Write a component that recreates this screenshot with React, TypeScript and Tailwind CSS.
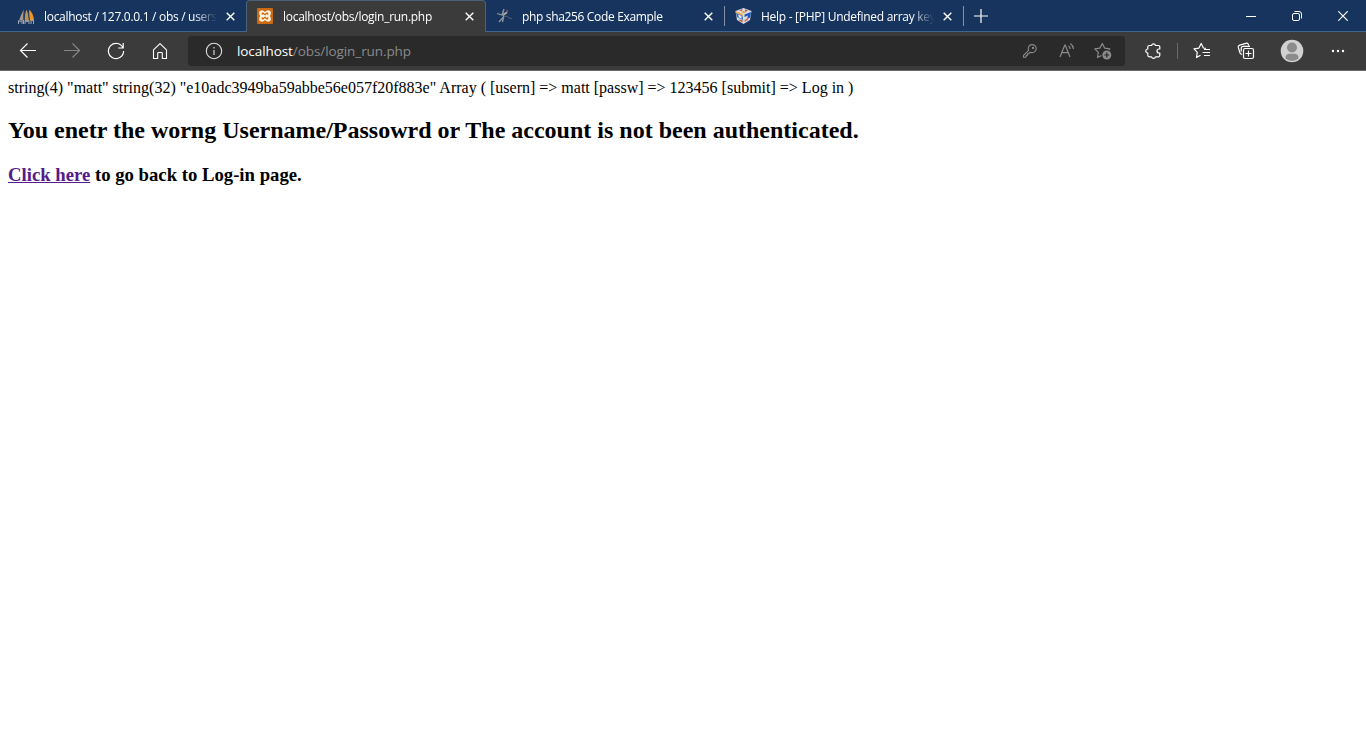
import type { ReactNode } from "react";

interface TabData {
  title: string;
  icon: ReactNode;
  boxClass: string;
  textClass: string;
  divider?: boolean;
}

function PhpMyAdminIcon() {
  return (
    <svg width="17" height="17" viewBox="0 0 17 17">
      <path d="M6 1.500C4 4.500 2.200 8.500 1.200 12.500h4.600C5.200 8 5.300 5 6 1.500Z" fill="#a39a8c" />
      <path d="M8.500 1.500C7 5 6.500 9 7 13h4.500C10.800 8.500 9.800 4.500 8.500 1.500Z" fill="#b9935d" />
      <path d="M11.300 1.500C11 5 11.300 9 12 12.500h4C15.800 8 14 4 11.300 1.500Z" fill="#e8962e" />
      <path d="M7 3.500C6 7 5.600 9.500 5.500 13M10.500 4c-.2 3 .3 6.500 1 9" stroke="#3a3d4c" strokeWidth=".8" fill="none" />
      <path d="M.5 16v-3.500l2 1.500 1.500-1.500V16M5.500 12v4M7 16v-3.500l2 1.500 2-1.500V16M13 16v-3.500h2.500V16" stroke="#a2a7b3" strokeWidth="1" fill="none" />
    </svg>
  );
}

function XamppIcon() {
  return (
    <svg width="16" height="16" viewBox="0 0 16 16">
      <rect width="16" height="16" rx="1" fill="#cb6a12" />
      <path
        d="M4 2.500h2.200L8 4l1.800-1.500H12A1.800 1.800 0 0 1 13.800 4.300v2L12.800 8l1 1.700v2a1.800 1.800 0 0 1-1.800 1.800H9.800L8 12l-1.800 1.500H4a1.800 1.800 0 0 1-1.800-1.800v-2L3.200 8l-1-1.700v-2A1.800 1.800 0 0 1 4 2.500Z"
        fill="#fff3df"
      />
      <path d="M4.800 5.200h1.400L8 6.700l1.800-1.500h1.400M4.800 10.800h1.400L8 9.300l1.800 1.500h1.400M5.300 5.500v1.300M10.700 5.500v1.300M5.300 9.200v1.300M10.700 9.200v1.300" stroke="#cb6a12" strokeWidth="1.200" fill="none" />
    </svg>
  );
}

function GrepperIcon() {
  return (
    <svg width="16" height="16" viewBox="0 0 16 16" fill="none">
      <path d="M1 5.500 6 7l2-6M7 3l.5 6L3 14M7 8l4-4M7.500 9.500 6.500 14" stroke="#8d979c" strokeWidth="1.300" />
      <path d="m8 6 3-1.500" stroke="#a7aaa6" strokeWidth="1.500" />
      <path d="m10.500 3.700 1.200-1.500" stroke="#a64b52" strokeWidth="1.500" />
      <path d="M8 8.700 11 8l2 2 3 .5" stroke="#536078" strokeWidth="1" />
    </svg>
  );
}

function ForumIcon() {
  return (
    <svg width="17" height="16" viewBox="0 0 17 16">
      <path d="M.5 3 8.500 0l8 3L15 12l-6.500 4L2 12Z" fill="#d9dce3" />
      <path d="M1 4.500 7.500 7.500 8 12 2 9Z" fill="#2968c4" />
      <path d="M.5 3 8 6v2L1 5Z" fill="#f0ad4f" />
      <path d="M3 6.500 6.500 8v2.500L4 9.500Z" fill="#edf0f3" />
      <path d="M9.500 6.500 16 4l-.8 5.500L12 11l1-3.500-3.500 1.500Z" fill="#2059b9" />
      <path d="M4 2.500 7.500 1 7 3ZM10 1.200l3 1.300-3 1.500ZM3 11.500l4.500 3V12Z" fill="#bf5639" />
      <path d="m9.500 12 4-2.500-.5 2.500-3.500 2Z" fill="#d9724f" />
      <path d="M6 3.800 8.500 3l3 1-3 1.200Z" fill="#e6a14f" />
    </svg>
  );
}

function CloseIcon() {
  return (
    <svg width="9" height="9" viewBox="0 0 9 9" fill="none" stroke="#fff" strokeWidth="1.400">
      <path d="m.7.7 7.600 7.600M8.300.7.7 8.300" />
    </svg>
  );
}

const tabs: TabData[] = [
  {
    title: "localhost / 127.0.0.1 / obs / users",
    icon: <PhpMyAdminIcon />,
    boxClass: "h-[31px] w-[239px] pl-[11px] pt-px",
    textClass: "tracking-[-0.3px]",
  },
  {
    title: "localhost/obs/login_run.php",
    icon: <XamppIcon />,
    boxClass: "relative z-10 h-8 w-60 rounded-t-[4px] border-x border-t border-[#49627a] bg-[#3b3b3b] pb-px pl-[10px]",
    textClass: "tracking-[-0.28px]",
  },
  {
    title: "php sha256 Code Example",
    icon: <GrepperIcon />,
    boxClass: "h-[31px] w-[239px] pl-[10px] pt-px",
    textClass: "tracking-[-0.34px]",
    divider: true,
  },
  {
    title: "Help - [PHP] Undefined array key",
    icon: <ForumIcon />,
    boxClass: "h-[31px] w-[239px] pl-[10px] pt-px",
    textClass: "tracking-[-0.28px]",
    divider: true,
  },
];

function Tab({ tab }: { tab: TabData }) {
  return (
    <div className={`flex items-center ${tab.boxClass}`}>
      <span className="flex w-[26px] shrink-0">{tab.icon}</span>
      <span
        className={`w-[173px] shrink-0 overflow-hidden whitespace-nowrap pt-px text-[12px] leading-4 text-white [mask-image:linear-gradient(to_right,black_150px,transparent_173px)] ${tab.textClass}`}
      >
        {tab.title}
      </span>
      <span className="ml-[9px] flex shrink-0">
        <CloseIcon />
      </span>
      {tab.divider && <span className="ml-auto h-5 w-px bg-[#8290a6]" />}
    </div>
  );
}

function TitleBar() {
  return (
    <div className="flex h-8 border-b border-[#3e668e] bg-[#17345f] pl-[7px]">
      <div className="flex h-[31px]">
        {tabs.map((tab) => (
          <Tab key={tab.title} tab={tab} />
        ))}
      </div>
      <div className="flex h-[31px] w-[34px] items-center justify-center">
        <svg width="14" height="14" viewBox="0 0 14 14" fill="none" stroke="#fff" strokeWidth="1.200">
          <path d="M0 7h14M7 0v14" />
        </svg>
      </div>
      {/* Window controls */}
      <div className="ml-auto flex h-[31px]">
        <div className="flex w-[46px] items-center justify-center">
          <svg width="10" height="10" viewBox="0 0 10 10" stroke="#fff">
            <path d="M0 5.500h10" />
          </svg>
        </div>
        <div className="flex w-[46px] items-center justify-center">
          <svg width="10" height="10" viewBox="0 0 10 10" fill="none" stroke="#fff">
            <rect x=".5" y="2.500" width="7" height="7" rx="1.500" />
            <path d="M2.500.5H7A2.500 2.500 0 0 1 9.500 3v4.500" />
          </svg>
        </div>
        <div className="flex w-[46px] items-center justify-center pt-px">
          <svg width="10" height="10" viewBox="0 0 10 10" fill="none" stroke="#fff" strokeWidth="1.200">
            <path d="m.3.3 9.400 9.400M9.700.3.3 9.700" />
          </svg>
        </div>
      </div>
    </div>
  );
}

function ToolButton({ width = "w-11", children }: { width?: string; children: ReactNode }) {
  return <div className={`flex h-[30px] shrink-0 items-center justify-center ${width}`}>{children}</div>;
}

function Toolbar() {
  return (
    <div className="flex h-[39px] items-center border-b border-[#69696b] bg-[#3b3b3b] pl-[6px]">
      <ToolButton>
        <svg width="18" height="18" viewBox="0 0 18 18" fill="none" stroke="#fff" strokeWidth="1.200">
          <path d="M17 8.500H1.500M8.500 1.500l-7 7 7 7" />
        </svg>
      </ToolButton>
      <ToolButton>
        <svg width="18" height="18" viewBox="0 0 18 18" fill="none" stroke="#858585" strokeWidth="1.200">
          <path d="M1 8.500h15.500M9.500 1.500l7 7-7 7" />
        </svg>
      </ToolButton>
      <ToolButton>
        <svg width="18" height="18" viewBox="0 0 18 18" fill="none" stroke="#fff" strokeWidth="1.200">
          <path d="M16 6A7.600 7.600 0 1 0 16.600 9M16.200 1v5h-5" />
        </svg>
      </ToolButton>
      <ToolButton>
        <svg width="18" height="18" viewBox="0 0 18 18" fill="none" stroke="#fff" strokeWidth="1.100" strokeLinejoin="round">
          <path d="M2.500 7.800 9 1.700l6.500 6.100v8.700h-4.200v-5.200a.8.800 0 0 0-.8-.8h-3a.8.800 0 0 0-.8.800v5.200H2.500Z" />
        </svg>
      </ToolButton>

      {/* Address bar */}
      <div className="ml-[6px] flex h-[30px] w-[937px] items-center rounded-[3px] bg-[#2a2a2a] pl-[17px]">
        <svg width="18" height="18" viewBox="0 0 18 18" fill="none" stroke="#e0e0e0" strokeWidth="1.100">
          <circle cx="9" cy="9" r="7.700" />
          <path d="M9 8v5M9 5v1.400" />
        </svg>
        <span className="ml-[14px] whitespace-nowrap text-[13.5px] leading-5 tracking-[-0.08px] text-[#8b8b8b]">
          <span className="text-white">localhost</span>/obs/login_run.php
        </span>
        <div className="ml-auto flex pr-1">
          <ToolButton width="w-9">
            <svg width="16" height="16" viewBox="0 0 16 16" fill="none" stroke="#8b8b8b" strokeWidth="1.100" strokeLinejoin="round">
              <path d="M6.600 7.300A4 4 0 1 1 9 9.400L8 9.300 6.800 10.800H5.500v1.500H4.200v1.500L3.500 14.300H1.500v-2Z" />
              <circle cx="11" cy="5" r=".6" />
            </svg>
          </ToolButton>
          <ToolButton width="w-[37px]">
            <svg width="18" height="18" viewBox="0 0 18 18" fill="none" stroke="#8b8b8b" strokeWidth="1.200">
              <path d="M2 15 6.800 3h.4L12 15M3.700 10.700h6.600M10.500 4c1 .7 1.600 1.700 1.700 3M12.300 1.500c1.800 1.300 2.900 3.100 3.200 5.500" />
            </svg>
          </ToolButton>
          <ToolButton width="w-9">
            <svg width="18" height="18" viewBox="0 0 18 18" fill="none" stroke="#8b8b8b" strokeWidth="1.200" strokeLinejoin="round">
              <path d="m7.500 13.500-4 2 .8-5.200L.8 6.800l5-.7L8.300 1.500l2.300 4.600 5.200.7-1 1" />
              <circle cx="12.800" cy="13" r="4.500" fill="#8b8b8b" stroke="none" />
              <path d="M12.800 10.500v5M10.300 13h5" stroke="#2a2a2a" />
            </svg>
          </ToolButton>
        </div>
      </div>

      <ToolButton width="w-14">
        <svg width="18" height="18" viewBox="0 0 18 18" fill="none" stroke="#fff" strokeWidth="1.200" strokeLinejoin="round">
          <path d="M5.300 3.500h2.300a2 2 0 0 1 3.900 0h2.800a1.500 1.500 0 0 1 1.500 1.500v2H15a2 2 0 0 0 0 4h.8v2.300a1.500 1.500 0 0 1-1.500 1.500h-2.800a2 2 0 0 1-3.900 0H5.300a1.500 1.500 0 0 1-1.500-1.500V11a2 2 0 0 1 0-4V5a1.500 1.500 0 0 1 1.500-1.500Z" />
        </svg>
      </ToolButton>
      <span className="-ml-1 h-4 w-px bg-[#686868]" />
      <ToolButton width="w-12">
        <svg width="18" height="18" viewBox="0 0 18 18" fill="none" stroke="#fff" strokeWidth="1.200" strokeLinejoin="round">
          <path d="m7.500 13.300-4 2.200.8-5.100L1 6.800l4.900-.7L8.200 1.500l2.200 4.500 2.600.4M11 7.500h6M9.500 10.500H17M11 13.500h6" />
        </svg>
      </ToolButton>
      <ToolButton width="w-10">
        <svg width="18" height="18" viewBox="0 0 18 18" fill="none" stroke="#fff" strokeWidth="1.200">
          <rect x="6.500" y="6.500" width="10" height="10" rx="1.500" />
          <path d="M11.500 8.500v6M8.500 11.500h6M5 12.500l-1-.5a2 2 0 0 1-1-1.200L1.300 5.500a2 2 0 0 1 1.300-2.400L9 1.300a2 2 0 0 1 2.300 1l.6 1.200M4.200 9.500V6.300a2 2 0 0 1 2-2H13" />
        </svg>
      </ToolButton>
      <ToolButton width="w-[52px]">
        <svg width="24" height="24" viewBox="0 0 24 24">
          <circle cx="12" cy="12" r="11.300" fill="#d1d1d1" />
          <circle cx="12" cy="8.500" r="5" fill="#8c8c8c" />
          <path d="M5.500 19.500v-1.200a4 4 0 0 1 4-3.500h5a4 4 0 0 1 4 3.500v1.200a10 10 0 0 1-13 0Z" fill="#8c8c8c" />
        </svg>
      </ToolButton>
      <ToolButton width="w-10">
        <svg width="14" height="4" viewBox="0 0 14 4" fill="#fff">
          <circle cx="2" cy="2" r="1.200" />
          <circle cx="7" cy="2" r="1.200" />
          <circle cx="12" cy="2" r="1.200" />
        </svg>
      </ToolButton>
    </div>
  );
}

export default function App() {
  return (
    <div className="h-[738px] w-[1366px] overflow-hidden bg-white font-['Open_Sans',sans-serif]">
      <TitleBar />
      <Toolbar />

      {/* Page content */}
      <div className="px-2 pt-2 font-['Liberation_Serif',serif] text-black">
        <p className="text-base leading-[18px]">
          string(4) "matt" string(32) "e10adc3949ba59abbe56e057f20f883e" Array ( [usern] =&gt; matt [passw] =&gt; 123456 [submit] =&gt; Log in )
        </p>
        <h2 className="mt-5 text-2xl leading-[27px] font-bold">
          You enetr the worng Username/Passowrd or The account is not been authenticated.
        </h2>
        <h3 className="mt-5 text-[18.72px] leading-[22px] font-bold">
          <a href="#" className="text-[#551a8b] underline">
            Click here
          </a>{" "}
          to go back to Log-in page.
        </h3>
      </div>
    </div>
  );
}
